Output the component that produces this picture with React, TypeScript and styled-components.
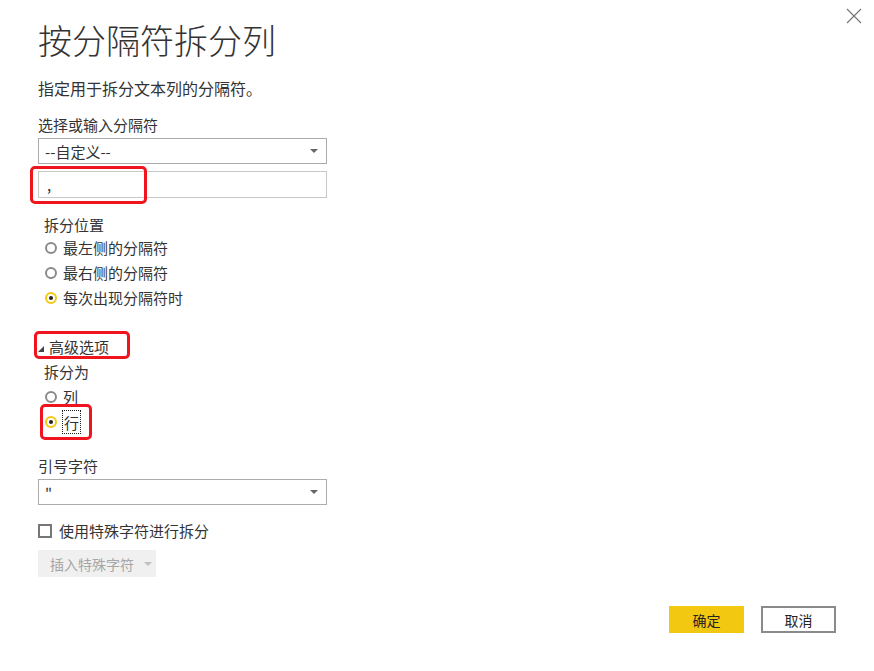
import styled, { createGlobalStyle } from "styled-components";

const GlobalStyle = createGlobalStyle`
  html, body {
    margin: 0;
    padding: 0;
    background: #fff;
  }
  body {
    font-family: "Noto Sans CJK SC", "Microsoft YaHei", sans-serif;
    color: #333;
  }
`;

const Dialog = styled.div`
  position: relative;
  box-sizing: border-box;
  width: 874px;
  height: 671px;
  padding: 0 38px 38px 38px;
  display: flex;
  flex-direction: column;
  background: #fff;
`;

const Close = styled.button`
  position: absolute;
  top: 8px;
  right: 12px;
  width: 16px;
  height: 16px;
  padding: 0;
  border: none;
  background: none;
  svg {
    display: block;
  }
`;

const Title = styled.h1`
  margin: 22px 0 0;
  font-size: 34px;
  line-height: 36px;
  font-weight: 300;
  color: #333;
`;

const Subtitle = styled.p`
  margin: 20px 0 0;
  font-size: 16px;
  line-height: 20px;
`;

const Label = styled.div<{ $top: number; $indent?: number }>`
  margin-top: ${(p) => p.$top}px;
  padding-left: ${(p) => p.$indent || 0}px;
  font-size: 15px;
  line-height: 20px;
  color: #333;
`;

const Select = styled.div<{ $top: number }>`
  box-sizing: border-box;
  margin-top: ${(p) => p.$top}px;
  width: 289px;
  height: 26px;
  border: 1px solid #ababab;
  display: flex;
  align-items: center;
  justify-content: space-between;
  padding: 0 8px 0 6px;
  font-size: 15px;
  color: #333;
`;

const Caret = styled.span<{ $color?: string }>`
  width: 0;
  height: 0;
  border-left: 4px solid transparent;
  border-right: 4px solid transparent;
  border-top: 4px solid ${(p) => p.$color || "#666"};
`;

const Field = styled.div`
  position: relative;
  margin-top: 7px;
  box-sizing: border-box;
  width: 289px;
  height: 27px;
  border: 1px solid #c8c8c8;
  padding: 0 8px;
  font-size: 15px;
  line-height: 25px;
`;

const Highlight = styled.span<{ $l: number; $t: number; $w: number; $h: number }>`
  position: absolute;
  left: ${(p) => p.$l}px;
  top: ${(p) => p.$t}px;
  width: ${(p) => p.$w}px;
  height: ${(p) => p.$h}px;
  box-sizing: border-box;
  border: 3px solid #f0141e;
  border-radius: 5px;
  pointer-events: none;
`;

const Group = styled.div<{ $top: number }>`
  margin-top: ${(p) => p.$top}px;
  padding-left: 7px;
`;

const RadioRow = styled.div`
  position: relative;
  height: 25px;
  display: flex;
  align-items: center;
  font-size: 15px;
  color: #333;
`;

const RadioDot = styled.span<{ $on?: boolean }>`
  box-sizing: border-box;
  width: 12px;
  height: 12px;
  border-radius: 50%;
  border: 2px solid ${(p) => (p.$on ? "#f2c811" : "#8a8a8a")};
  margin-right: 6px;
  display: flex;
  align-items: center;
  justify-content: center;
  &::after {
    content: "";
    display: ${(p) => (p.$on ? "block" : "none")};
    width: 4px;
    height: 4px;
    border-radius: 50%;
    background: #222;
  }
`;

const Focus = styled.span`
  outline: 1px dotted #222;
  outline-offset: 0;
  padding: 2px 1px 0;
  line-height: 20px;
`;

const Toggle = styled.div`
  position: relative;
  margin-top: 27px;
  display: flex;
  align-items: center;
  font-size: 15px;
  line-height: 20px;
  color: #333;
`;

const Arrow = styled.span`
  width: 0;
  height: 0;
  border-left: 6px solid transparent;
  border-bottom: 6px solid #444;
  margin: 4px 5px 0 0;
`;

const CheckRow = styled.div`
  margin-top: 16px;
  display: flex;
  align-items: center;
  font-size: 15px;
  line-height: 20px;
`;

const Box = styled.span`
  box-sizing: border-box;
  width: 14px;
  height: 14px;
  border: 2px solid #777;
  margin-right: 7px;
`;

const InsertButton = styled.div`
  margin-top: 9px;
  width: 118px;
  height: 27px;
  background: #f0f0f0;
  color: #a6a6a6;
  font-size: 14px;
  display: flex;
  align-items: center;
  padding-left: 12px;
  box-sizing: border-box;
  gap: 10px;
`;

const Footer = styled.div`
  margin-top: auto;
  display: flex;
  justify-content: flex-end;
  gap: 17px;
`;

const Button = styled.button<{ $primary?: boolean }>`
  box-sizing: border-box;
  width: 75px;
  height: 27px;
  font-family: inherit;
  font-size: 14px;
  color: #252423;
  background: ${(p) => (p.$primary ? "#f2c811" : "#fff")};
  border: ${(p) => (p.$primary ? "none" : "2px solid #8a8a8a")};
  padding: 0;
`;

export default function App() {
  return (
    <>
      <GlobalStyle />
      <Dialog>
        <Close>
          <svg width="16" height="16" viewBox="0 0 16 16">
            <path d="M1 1 L15 15 M15 1 L1 15" stroke="#777" strokeWidth="1.2" />
          </svg>
        </Close>
        <Title>按分隔符拆分列</Title>
        <Subtitle>指定用于拆分文本列的分隔符。</Subtitle>
        <Label $top={17}>选择或输入分隔符</Label>
        <Select $top={3}>
          <span>--自定义--</span>
          <Caret />
        </Select>
        <Field>
          ,
          <Highlight $l={-9} $t={-6} $w={117} $h={38} />
        </Field>
        <Label $top={17} $indent={6}>
          拆分位置
        </Label>
        <Group $top={0}>
          <RadioRow>
            <RadioDot />
            最左侧的分隔符
          </RadioRow>
          <RadioRow>
            <RadioDot />
            最右侧的分隔符
          </RadioRow>
          <RadioRow>
            <RadioDot $on />
            每次出现分隔符时
          </RadioRow>
        </Group>
        <Toggle>
          <Arrow />
          高级选项
          <Highlight $l={-4} $t={-6} $w={96} $h={28} />
        </Toggle>
        <Label $top={5} $indent={6}>
          拆分为
        </Label>
        <Group $top={2}>
          <RadioRow>
            <RadioDot />
            列
          </RadioRow>
          <RadioRow>
            <RadioDot $on />
            <Focus>行</Focus>
            <Highlight $l={-5} $t={-5} $w={52} $h={36} />
          </RadioRow>
        </Group>
        <Label $top={22}>引号字符</Label>
        <Select $top={3}>
          <span>"</span>
          <Caret />
        </Select>
        <CheckRow>
          <Box />
          使用特殊字符进行拆分
        </CheckRow>
        <InsertButton>
          插入特殊字符
          <Caret $color="#c0c0c0" />
        </InsertButton>
        <Footer>
          <Button $primary>确定</Button>
          <Button>取消</Button>
        </Footer>
      </Dialog>
    </>
  );
}
